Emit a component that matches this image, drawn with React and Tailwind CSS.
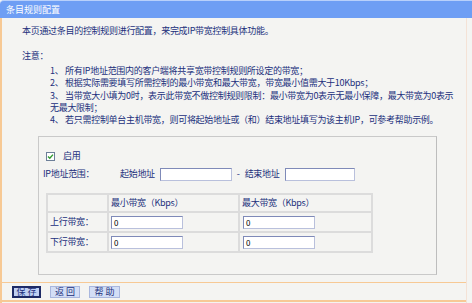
import React from "react";

const font = { fontFamily: '"Noto Sans CJK SC", "Noto Sans", sans-serif' };

function Check() {
  return (
    <svg width="9" height="9" viewBox="0 0 9 9" className="block">
      <rect x="0.5" y="0.5" width="8" height="8" fill="#ffffff" stroke="#6d7f99" />
      <path d="M2 4.5 L3.8 6.3 L7 2.6" fill="none" stroke="#2f9a2f" strokeWidth="1.4" />
    </svg>
  );
}

function Field({ w = "w-[72px]", value = "" }) {
  return (
    <div className={`${w} h-[13px] bg-white border border-[#7f8ab8] border-b-[#b9c0dc] border-r-[#b9c0dc] text-[8px] leading-[11px] pl-[2px] text-black tracking-normal`}>
      {value}
    </div>
  );
}

export default function App() {
  return (
    <div className="w-[472px] h-[303px] overflow-hidden bg-[#f4f4f2] text-[9px] text-[#22307c]" style={font}>
      <div className="h-[18px] bg-[#6e9ef4] border-t border-[#b8d0fb] rounded-tl-[4px] flex items-center pl-[6px] text-white leading-[12px]">
        条目规则配置
      </div>
      <div className="h-[285px] border-l-2 border-[#f7c995] border-r border-r-[#f4e2d6] w-[467px] flex flex-col tracking-[-0.3px]">
        <div className="mt-[7px] pl-[20px] leading-[12px] whitespace-nowrap">
          本页通过条目的控制规则进行配置，来完成IP带宽控制具体功能。
        </div>
        <div className="mt-[13px] pl-[20px] leading-[12px]">注意：</div>
        <div className="mt-[3px] pl-[48px] leading-[12.3px] whitespace-nowrap">
          <div>1、 所有IP地址范围内的客户端将共享宽带控制规则所设定的带宽；</div>
          <div>2、 根据实际需要填写所需控制的最小带宽和最大带宽，带宽最小值需大于10Kbps；</div>
          <div>3、 当带宽大小填为0时，表示此带宽不做控制规则限制：最小带宽为0表示无最小保障，最大带宽为0表示</div>
          <div>无最大限制；</div>
          <div>4、 若只需控制单台主机带宽，则可将起始地址或（和）结束地址填写为该主机IP，可参考帮助示例。</div>
        </div>
        <div className="mt-[10px] ml-[36px] w-[399px] h-[139px] border border-[#c9c9c9] border-r-[#bdbdbd] flex flex-col">
          <div className="mt-[13px] pl-[7px] flex items-center h-[12px] leading-[12px]">
            <Check />
            <span className="ml-[8px]">启用</span>
          </div>
          <div className="mt-[5px] pl-[4px] flex items-center h-[14px] leading-[12px] whitespace-nowrap">
            <span className="w-[77px]">IP地址范围：</span>
            <span>起始地址</span>
            <div className="ml-[5px]"><Field /></div>
            <span className="ml-[5px]">-</span>
            <span className="ml-[5px]">结束地址</span>
            <div className="ml-[6px]"><Field w="w-[70px]" /></div>
          </div>
          <div className="mt-[12px] ml-[7px] w-[327px] grid grid-cols-[59px_129px_131px] grid-rows-[16px_18px_18px] gap-[2px] p-[2px] bg-[#dcdcdc] leading-[12px]">
            <div className="bg-[#f4f4f2]"></div>
            <div className="bg-[#f4f4f2] flex items-center pl-[2px]">最小带宽（Kbps）</div>
            <div className="bg-[#f4f4f2] flex items-center pl-[2px]">最大带宽（Kbps）</div>
            <div className="bg-[#f4f4f2] flex items-center pl-[2px]">上行带宽：</div>
            <div className="bg-[#f4f4f2] flex items-center pl-[2px]"><Field value="0" /></div>
            <div className="bg-[#f4f4f2] flex items-center pl-[3px]"><Field value="0" /></div>
            <div className="bg-[#f4f4f2] flex items-center pl-[2px]">下行带宽：</div>
            <div className="bg-[#f4f4f2] flex items-center pl-[2px]"><Field value="0" /></div>
            <div className="bg-[#f4f4f2] flex items-center pl-[3px]"><Field value="0" /></div>
          </div>
        </div>
        <div className="mt-[7px] border-t border-[#f7c995] h-[18px] flex items-center pl-[10px] gap-[9px] leading-[10px] tracking-normal">
          <div className="w-[29px] h-[12px] border-2 border-[#1d2a66] bg-[#bfcff2] flex items-center justify-center">保 存</div>
          <div className="w-[30px] h-[12px] border border-[#a9b7de] bg-[#d3def6] flex items-center justify-center">返 回</div>
          <div className="w-[31px] h-[12px] border border-[#a9b7de] bg-[#d3def6] flex items-center justify-center">帮 助</div>
        </div>
        <div className="border-t-2 border-[#f7c995]"></div>
      </div>
    </div>
  );
}
